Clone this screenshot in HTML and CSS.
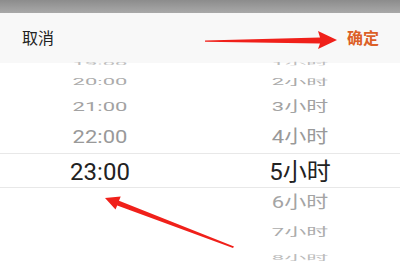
FILE: index.html
```html
<!DOCTYPE html>
<html lang="zh-CN">
<head>
    <meta charset="UTF-8">
    <meta name="viewport" content="width=device-width, initial-scale=1.0">
    <title>时间选择</title>
    <link rel="stylesheet" href="styles.css">
</head>
<body>
    <div class="screen">
        <div class="statusbar"></div>
        <div class="header">
            <span class="cancel">取消</span>
            <span class="confirm">确定</span>
        </div>
        <div class="picker">
            <div class="band"></div>
            <div class="column">
                <div class="row r0 d4"><span>19:00</span></div>
                <div class="row r1 d3"><span>20:00</span></div>
                <div class="row r2 d2"><span>21:00</span></div>
                <div class="row r3 d1"><span>22:00</span></div>
                <div class="row r4 selected"><span>23:00</span></div>
            </div>
            <div class="column">
                <div class="row r0 d4"><span>1小时</span></div>
                <div class="row r1 d3"><span>2小时</span></div>
                <div class="row r2 d2"><span>3小时</span></div>
                <div class="row r3 d1"><span>4小时</span></div>
                <div class="row r4 selected"><span>5小时</span></div>
                <div class="row r5 b1"><span>6小时</span></div>
                <div class="row r6 b2"><span>7小时</span></div>
                <div class="row r7 b3"><span>8小时</span></div>
            </div>
        </div>

        <!-- 标注箭头 -->
        <svg class="arrows" width="400" height="270" viewBox="0 0 400 270">
            <polygon points="205,40.5 320,37.5 318,31 337,40 318,49 320,43.5 205,41.8" fill="#f0201a"/>
            <polygon points="233,248 117.2,205.4 115.5,209.6 105,198 120.7,196.6 119,200.8 234,246.6" fill="#f0201a"/>
        </svg>
    </div>
</body>
</html>
```

FILE: styles.css
```css
body {
    margin: 0;
    padding: 0;
    font-family: Roboto, "Noto Sans CJK SC", sans-serif;
    background-color: #fff;
}

.screen {
    position: relative;
    width: 400px;
    height: 270px;
    overflow: hidden;
    display: flex;
    flex-direction: column;
}

.statusbar {
    height: 13px;
    background: linear-gradient(#8c8c8c, #a9a9a9);
}

.header {
    height: 50px;
    display: flex;
    align-items: center;
    justify-content: space-between;
    padding: 0 21px 0 22px;
    padding-bottom: 2px;
    box-sizing: border-box;
    background-color: #f8f8f8;
    font-size: 16px;
}

.cancel {
    color: #222;
}

.confirm {
    color: #dc6027;
    font-weight: bold;
}

.picker {
    position: relative;
    flex: 1;
    display: flex;
    background-color: #fff;
}

.band {
    position: absolute;
    left: 0;
    right: 0;
    top: 90px;
    height: 33px;
    border-top: 1px solid #e8e8e8;
    border-bottom: 1px solid #e8e8e8;
}

.column {
    flex: 1;
    display: flex;
    flex-direction: column;
    align-items: center;
}

.row {
    display: flex;
    align-items: center;
    justify-content: center;
    font-size: 22px;
    color: #9c9c9c;
}

.row span {
    display: block;
    line-height: 1;
}

.r0 { height: 17px; margin-top: -8px; }
.r1 { height: 20px; }
.r2 { height: 29px; }
.r3 { height: 32px; }
.r4 { height: 34px; padding-top: 3px; box-sizing: border-box; }
.r5 { height: 31px; }
.r6 { height: 27px; }
.r7 { height: 25px; }

.d1 span { transform: scaleY(0.82); color: #999; }
.d2 span { transform: scaleY(0.6); color: #a2a2a2; }
.d3 span { transform: scaleY(0.38); color: #ababab; }
.d4 span { transform: scaleY(0.18); color: #bdbdbd; }

.b1 span { transform: scaleY(0.75); color: #a4a4a4; }
.b2 span { transform: scaleY(0.52); color: #acacac; }
.b3 span { transform: scaleY(0.32); color: #bcbcbc; }

.selected {
    font-size: 24px;
    color: #222;
}

.arrows {
    position: absolute;
    left: 0;
    top: 0;
    pointer-events: none;
}
```
